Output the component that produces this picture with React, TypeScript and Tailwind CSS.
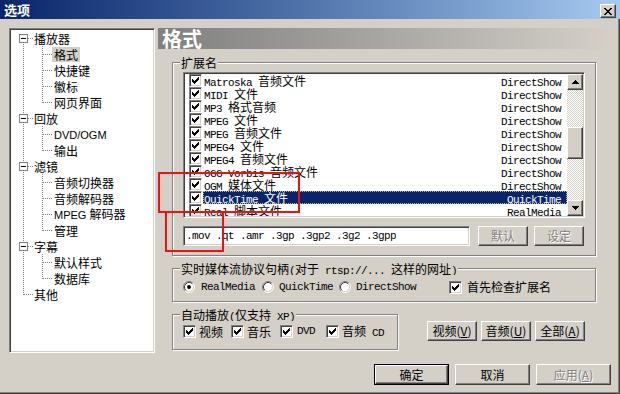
import React from "react";

const CJK = "font-['Noto_Sans_CJK_SC',sans-serif]";
const MONO = "font-['Liberation_Mono','Noto_Sans_CJK_SC',monospace] text-[11px] tracking-[-0.6px]";
const SANS = "font-['Liberation_Sans','Noto_Sans_CJK_SC',sans-serif] text-[11px]";

const RAISED =
  "border border-t-white border-l-white border-b-[#404040] border-r-[#404040] shadow-[inset_-1px_-1px_0_#808080]";
const SUNKEN =
  "border border-t-[#808080] border-l-[#808080] border-b-white border-r-white shadow-[inset_1px_1px_0_#404040,inset_-1px_-1px_0_#d4d0c8]";
const DIS = "text-[#808080] [text-shadow:1px_1px_0_#ffffff]";

const CHECK =
  "M6 0h1v1H6z M5 1h2v1H5z M0 2h1v1H0z M4 2h3v1H4z M0 3h2v1H0z M3 3h3v1H3z M0 4h5v1H0z M1 5h3v1H1z M2 6h1v1H2z";
const CLOSE =
  "M0 0h2v1H0z M6 0h2v1H6z M1 1h2v1H1z M5 1h2v1H5z M2 2h4v1H2z M3 3h2v1H3z M2 4h4v1H2z M1 5h2v1H1z M5 5h2v1H5z M0 6h2v1H0z M6 6h2v1H6z";
const UP = "M3 0h1v1H3z M2 1h3v1H2z M1 2h5v1H1z M0 3h7v1H0z";
const DOWN = "M0 0h7v1H0z M1 1h5v1H1z M2 2h3v1H2z M3 3h1v1H3z";

const isCJK = (s: string) => /[\u3000-\u9fff\uff00-\uffef]/.test(s);

// latin runs and CJK runs get their own font, like the bitmap dialog font does
function Mixed({ s, lat = MONO }: { s: string; lat?: string }) {
  const parts = s.split(/([\u3000-\u9fff\uff00-\uffef]+)/).filter(Boolean);
  return (
    <span className="whitespace-pre">
      {parts.map((p, i) =>
        isCJK(p) ? (
          <span key={i} className={`${CJK} text-[12px]`}>{p}</span>
        ) : (
          <span key={i} className={lat}>{p}</span>
        )
      )}
    </span>
  );
}

function Check({ on = true }: { on?: boolean }) {
  return (
    <span className={`inline-flex w-[13px] h-[13px] shrink-0 items-center justify-center bg-white ${SUNKEN}`}>
      {on && (
        <svg width="7" height="7" viewBox="0 0 7 7" shapeRendering="crispEdges">
          <path d={CHECK} fill="#000" />
        </svg>
      )}
    </span>
  );
}

function Radio({ on = false }: { on?: boolean }) {
  return (
    <svg width="12" height="12" viewBox="0 0 12 12" className="shrink-0 block">
      <circle cx="6" cy="6" r="4.5" fill="#fff" />
      <path d="M2.11 9.89 A5.5 5.5 0 0 1 9.89 2.11" stroke="#808080" fill="none" />
      <path d="M9.89 2.11 A5.5 5.5 0 0 1 2.11 9.89" stroke="#fff" fill="none" />
      <path d="M2.82 9.18 A4.5 4.5 0 0 1 9.18 2.82" stroke="#404040" fill="none" />
      <path d="M9.18 2.82 A4.5 4.5 0 0 1 2.82 9.18" stroke="#d4d0c8" fill="none" />
      {on && <circle cx="6" cy="6" r="2" fill="#000" />}
    </svg>
  );
}

function Group({ legend, className, children }: { legend: string; className: string; children: React.ReactNode }) {
  return (
    <div className={`relative border border-[#808080] shadow-[inset_1px_1px_0_#ffffff,1px_1px_0_#ffffff] ${className}`}>
      <div className="absolute left-[7px] -top-[8px] h-[14px] px-[1px] bg-[#d4d0c8] leading-[14px] overflow-hidden">
        <Mixed s={legend} />
      </div>
      {children}
    </div>
  );
}

function Btn({ label, accel, w, h = "h-[20px]", disabled, className = "" }: { label: string; accel?: string; w: string; h?: string; disabled?: boolean; className?: string }) {
  return (
    <div className={`${w} ${h} ${RAISED} flex items-center justify-center ${CJK} text-[12px] leading-none ${disabled ? DIS : ""} ${className}`}>
      <span>{label}</span>
      {accel && (
        <span>
          (<span className="underline underline-offset-1">{accel}</span>)
        </span>
      )}
    </div>
  );
}

const tree = [
  { t: "播放器", l: 0 },
  { t: "格式", l: 1, sel: true },
  { t: "快捷键", l: 1 },
  { t: "徽标", l: 1 },
  { t: "网页界面", l: 1 },
  { t: "回放", l: 0 },
  { t: "DVD/OGM", l: 1 },
  { t: "输出", l: 1 },
  { t: "滤镜", l: 0 },
  { t: "音频切换器", l: 1 },
  { t: "音频解码器", l: 1 },
  { t: "MPEG 解码器", l: 1 },
  { t: "管理", l: 1 },
  { t: "字幕", l: 0 },
  { t: "默认样式", l: 1 },
  { t: "数据库", l: 1 },
  { t: "其他", l: 0 },
];

function TreeLines() {
  const cy = (i: number) => 9 + 16 * i;
  const roots = tree.map((n, i) => (n.l === 0 ? i : -1)).filter((i) => i >= 0);
  const last = roots[roots.length - 1];
  const dot = { stroke: "#808080", strokeDasharray: "1 1", shapeRendering: "crispEdges" as const };
  const lines: React.ReactNode[] = [];
  const boxes: React.ReactNode[] = [];
  lines.push(<line key="rv" x1={13.5} y1={cy(0)} x2={13.5} y2={cy(last) + 1} {...dot} />);
  roots.forEach((r, k) => {
    const next = k + 1 < roots.length ? roots[k + 1] : tree.length;
    const kids = next - r > 1;
    lines.push(<line key={`h${r}`} x1={kids ? 18 : 14} y1={cy(r) + 0.5} x2={23} y2={cy(r) + 0.5} {...dot} />);
    if (kids) {
      lines.push(<line key={`v${r}`} x1={32.5} y1={cy(r) + 8} x2={32.5} y2={cy(next - 1) + 1} {...dot} />);
      for (let c = r + 1; c < next; c++) {
        lines.push(<line key={`c${c}`} x1={33} y1={cy(c) + 0.5} x2={42} y2={cy(c) + 0.5} {...dot} />);
      }
      boxes.push(
        <g key={`b${r}`} shapeRendering="crispEdges">
          <rect x={9.5} y={cy(r) - 3.5} width={8} height={8} fill="#fff" stroke="#808080" />
          <line x1={11} y1={cy(r) + 0.5} x2={16} y2={cy(r) + 0.5} stroke="#000" />
        </g>
      );
    }
  });
  return (
    <svg className="absolute left-0 top-0" width="144" height="323">
      {lines}
      {boxes}
    </svg>
  );
}

const rows = [
  ["Matroska 音频文件", "DirectShow"],
  ["MIDI 文件", "DirectShow"],
  ["MP3 格式音频", "DirectShow"],
  ["MPEG 文件", "DirectShow"],
  ["MPEG 音频文件", "DirectShow"],
  ["MPEG4 文件", "DirectShow"],
  ["MPEG4 音频文件", "DirectShow"],
  ["OGG Vorbis 音频文件", "DirectShow"],
  ["OGM 媒体文件", "DirectShow"],
  ["QuickTime 文件", "QuickTime"],
  ["Real 脚本文件", "RealMedia"],
];

function ScrollBtn({ d }: { d: string }) {
  return (
    <div className={`w-[16px] h-[16px] bg-[#d4d0c8] ${RAISED} flex items-center justify-center`}>
      <svg width="7" height="4" viewBox="0 0 7 4" shapeRendering="crispEdges">
        <path d={d} fill="#000" />
      </svg>
    </div>
  );
}

export default function App() {
  return (
    <div className="relative w-[620px] h-[394px] overflow-hidden bg-[#d4d0c8] text-black shadow-[inset_-1px_-1px_0_#404040,inset_-2px_-2px_0_#808080]">
      {/* caption */}
      <div className="flex h-[19px] items-start justify-between bg-gradient-to-r from-[#0a246a] to-[#a6caf0] pr-[4px]">
        <span className={`${CJK} pl-[4px] pt-[2px] text-[13px] font-bold leading-[15px] text-white`}>选项</span>
        <div className={`mt-[4px] w-[16px] h-[14px] bg-[#d4d0c8] ${RAISED} flex items-center justify-center`}>
          <svg width="8" height="7" viewBox="0 0 8 7" shapeRendering="crispEdges">
            <path d={CLOSE} fill="#000" />
          </svg>
        </div>
      </div>

      <div className="flex pt-[9px]">
        {/* tree */}
        <div className={`relative ml-[9px] w-[146px] h-[325px] bg-white ${SUNKEN} p-[1px]`}>
          <TreeLines />
          <div className="relative">
            {tree.map((n, i) => (
              <div key={i} className={`flex h-[16px] items-center ${n.l === 0 ? "pl-[21px]" : "pl-[41px]"}`}>
                <span className={`px-[2px] leading-[15px] ${n.sel ? "bg-[#d4d0c8]" : ""}`}>
                  <Mixed s={n.t} lat={SANS} />
                </span>
              </div>
            ))}
          </div>
        </div>

        {/* page */}
        <div className="ml-[3px] w-[454px]">
          <div className="h-[21px] bg-gradient-to-r from-[#808080] to-[#d4d0c8] pl-[4px]">
            <span className={`${CJK} text-[20px] font-bold leading-[21px] text-white`}>格式</span>
          </div>

          <Group legend="扩展名" className="mt-[13px] ml-[14px] w-[424px] h-[194px] pt-[9px] pl-[10px]">
            <div className={`flex w-[402px] h-[146px] overflow-hidden bg-white ${SUNKEN} p-[1px]`}>
              <div className="flex-1 overflow-hidden pl-[4px]">
                {rows.map(([name, via], i) => {
                  const sel = i === 9;
                  return (
                    <div key={i} className="flex h-[13px] items-center">
                      <Check />
                      <div
                        className={`ml-[1px] flex h-[13px] flex-1 items-baseline justify-between overflow-hidden pl-[1px] pr-[6px] leading-[13px] ${
                          sel ? "bg-[#0a246a] text-white outline-1 outline-dotted -outline-offset-1 outline-[#c8b878]" : ""
                        }`}
                      >
                        <Mixed s={name} />
                        <span className={MONO}>{via}</span>
                      </div>
                    </div>
                  );
                })}
              </div>
              <div className="flex w-[16px] flex-col">
                <ScrollBtn d={UP} />
                <div className="flex flex-1 flex-col [background:repeating-conic-gradient(#d4d0c8_0%_25%,#ffffff_0%_50%)_0_0/2px_2px]">
                  <div className="h-[37px]" />
                  <div className={`h-[32px] bg-[#d4d0c8] ${RAISED}`} />
                </div>
                <ScrollBtn d={DOWN} />
              </div>
            </div>

            <div className="mt-[8px] flex">
              <div className={`flex w-[287px] h-[20px] items-center overflow-hidden bg-white ${SUNKEN} pl-[2px]`}>
                <span className={`${MONO} whitespace-pre`}>.mov .qt .amr .3gp .3gp2 .3g2 .3gpp</span>
              </div>
              <Btn label="默认" w="w-[50px]" disabled className="ml-[8px]" />
              <Btn label="设定" w="w-[50px]" disabled className="ml-[6px]" />
            </div>
          </Group>

          <Group legend="实时媒体流协议句柄(对于 rtsp://... 这样的网址)" className="mt-[12px] ml-[14px] w-[424px] h-[34px] pt-[12px] pl-[10px]">
            <div className="flex h-[12px] items-center">
              <Radio on />
              <span className={`${MONO} ml-[6px]`}>RealMedia</span>
              <span className="ml-[7px]"><Radio /></span>
              <span className={`${MONO} ml-[5px]`}>QuickTime</span>
              <span className="ml-[6px]"><Radio /></span>
              <span className={`${MONO} ml-[5px]`}>DirectShow</span>
              <span className="ml-[33px] flex"><Check /></span>
              <span className={`${CJK} ml-[5px] text-[12px]`}>首先检查扩展名</span>
            </div>
          </Group>

          <div className="mt-[12px] flex items-start">
            <Group legend="自动播放(仅支持 XP)" className="ml-[14px] w-[226px] h-[36px] pt-[10px] pl-[10px]">
              <div className="flex h-[13px] items-center">
                <Check />
                <span className={`${CJK} ml-[3px] text-[12px]`}>视频</span>
                <span className="ml-[8px] flex"><Check /></span>
                <span className={`${CJK} ml-[3px] text-[12px]`}>音乐</span>
                <span className="ml-[9px] flex"><Check /></span>
                <span className={`${MONO} ml-[4px]`}>DVD</span>
                <span className="ml-[11px] flex"><Check /></span>
                <span className="ml-[3px] leading-[13px]"><Mixed s="音频 CD" /></span>
              </div>
            </Group>
            <Btn label="视频" accel="V" w="w-[50px]" className="ml-[29px] mt-[7px]" />
            <Btn label="音频" accel="U" w="w-[50px]" className="ml-[4px] mt-[7px]" />
            <Btn label="全部" accel="A" w="w-[50px]" className="ml-[4px] mt-[7px]" />
          </div>
        </div>
      </div>

      {/* dialog buttons */}
      <div className="mt-[11px] flex justify-end pr-[9px]">
        <div className="w-[75px] h-[21px] border border-black">
          <Btn label="确定" w="w-full" h="h-full" />
        </div>
        <Btn label="取消" w="w-[75px]" h="h-[21px]" className="ml-[6px]" />
        <Btn label="应用" accel="A" w="w-[75px]" h="h-[21px]" disabled className="ml-[6px]" />
      </div>

      {/* red annotation marks */}
      <div className="absolute left-[158px] top-[172px] w-[142px] h-[41px] border-2 border-[#ee1111]" />
      <div className="absolute left-[165px] top-[211px] w-[59px] h-[41px] border-2 border-[#ee1111]" />
    </div>
  );
}
